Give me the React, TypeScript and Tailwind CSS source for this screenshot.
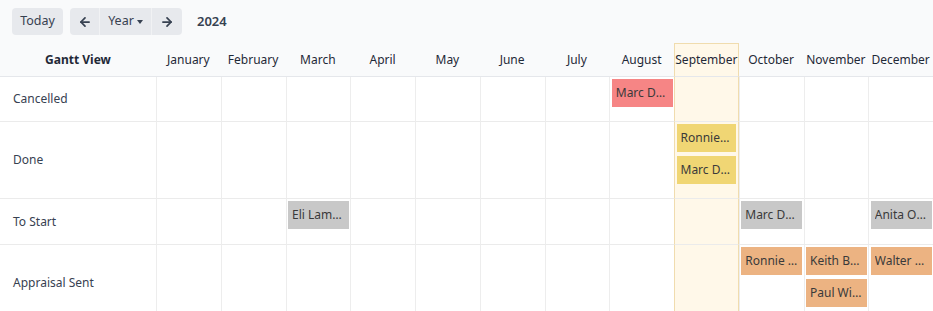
import { ArrowLeft, ArrowRight } from 'lucide-react';

const months = [
  'January', 'February', 'March', 'April', 'May', 'June',
  'July', 'August', 'September', 'October', 'November', 'December',
];

const TODAY_COL = 8;

const pillColors: Record<string, string> = {
  red: 'bg-[#f68585]',
  yellow: 'bg-[#f0d674]',
  gray: 'bg-[#c8c8c8]',
  orange: 'bg-[#ecb382]',
};

type Row = {
  label: string;
  height: string;
  color: string;
  pills: Record<number, string[]>;
};

const rows: Row[] = [
  { label: 'Cancelled', height: 'h-[45px]', color: 'red', pills: { 7: ['Marc Demo'] } },
  { label: 'Done', height: 'h-[77px]', color: 'yellow', pills: { 8: ['Ronnie Hart', 'Marc Demo'] } },
  { label: 'To Start', height: 'h-[46px]', color: 'gray', pills: { 2: ['Eli Lambert'], 9: ['Marc Demo'], 11: ['Anita Oliver'] } },
  { label: 'Appraisal Sent', height: 'h-[77px]', color: 'orange', pills: { 9: ['Ronnie Hart'], 10: ['Keith Byrd', 'Paul Williams'], 11: ['Walter Horton'] } },
];

function Toolbar() {
  return (
    <div className="flex items-center h-[43px] px-3 gap-[7px]">
      <button className="h-[27px] w-[51px] rounded bg-[#e7e9ed] text-[12.5px] text-[#374151]">Today</button>
      <div className="flex h-[27px] rounded bg-[#e7e9ed] text-[12.5px] text-[#374151]">
        <button className="w-[30px] flex items-center justify-center border-r border-[#f1f2f4]">
          <ArrowLeft size={14} strokeWidth={3} />
        </button>
        <button className="w-[52px] flex items-center justify-center gap-[3px] border-r border-[#f1f2f4]">
          Year
          <span className="w-0 h-0 border-x-[3.5px] border-x-transparent border-t-[4px] border-t-[#374151] mt-[1px]" />
        </button>
        <button className="w-[30px] flex items-center justify-center">
          <ArrowRight size={14} strokeWidth={3} />
        </button>
      </div>
      <span className="ml-[8px] text-[13px] font-semibold text-[#374151]">2024</span>
    </div>
  );
}

export default function App() {
  return (
    <div className="w-[933px] h-[311px] overflow-hidden bg-[#f9fafb] font-['Noto_Sans',sans-serif]">
      <Toolbar />
      <div className="grid grid-cols-[156px_repeat(12,minmax(0,1fr))]">
        {/* Header */}
        <div className="h-[34px] flex items-center justify-center text-[12px] font-bold text-[#1f2937] border-b border-[#e5e7eb]">
          Gantt View
        </div>
        {months.map((m, i) => (
          <div
            key={m}
            className={`h-[34px] flex items-center justify-center text-[12px] text-[#1f2937] border-b border-[#e5e7eb] whitespace-nowrap ${
              i === TODAY_COL ? 'bg-[#fff8e9] border-x border-t border-x-[#f0dcae] border-t-[#f0dcae]' : ''
            }`}
          >
            {m}
          </div>
        ))}

        {/* Rows */}
        {rows.map((row) => (
          <div key={row.label} className="contents">
            <div className={`${row.height} bg-white flex items-center pl-[13px] text-[12px] text-[#374151] border-b border-[#ebebeb]`}>
              {row.label}
            </div>
            {months.map((m, i) => (
              <div
                key={m}
                className={`${row.height} flex flex-col gap-[4px] pt-[2px] px-[1.5px] border-b border-[#ebebeb] ${
                  i === TODAY_COL ? 'bg-[#fff8e9] border-x border-x-[#f0dcae]' : 'bg-white border-l border-l-[#ededed]'
                }`}
              >
                {(row.pills[i] || []).map((name) => (
                  <div
                    key={name}
                    className={`h-[28px] shrink-0 flex items-center px-[4px] ${pillColors[row.color]} text-[12px] text-[#3a3a3a] overflow-hidden`}
                  >
                    <span className="truncate">{name}</span>
                  </div>
                ))}
              </div>
            ))}
          </div>
        ))}
      </div>
    </div>
  );
}
